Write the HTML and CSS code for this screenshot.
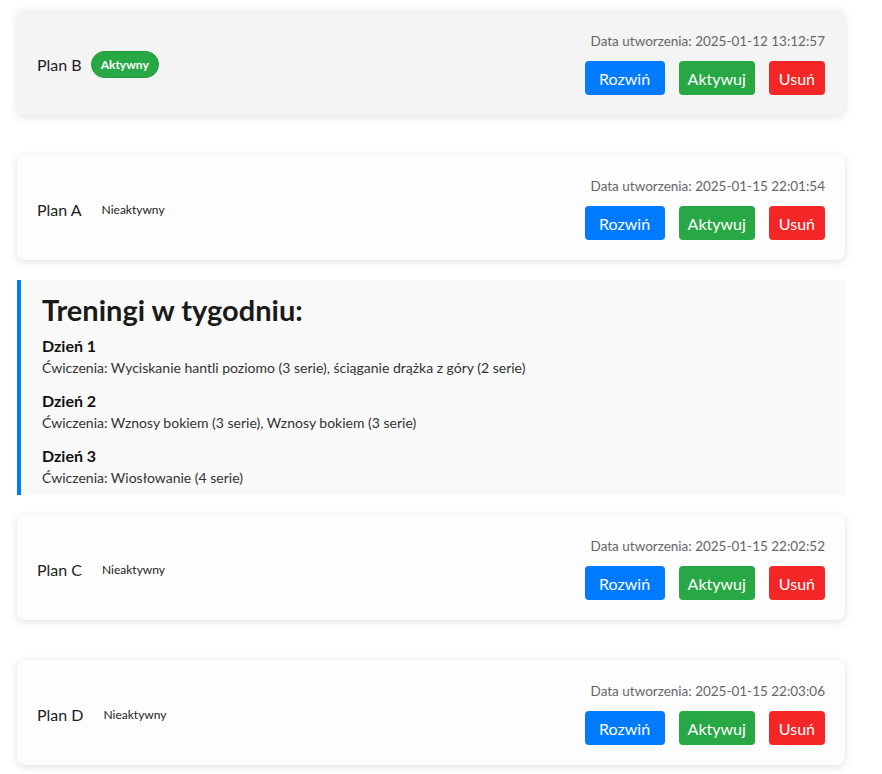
FILE: index.html
```html
<!DOCTYPE html>
<html lang="pl">
<head>
<meta charset="utf-8">
<title>Plany treningowe</title>
<link rel="stylesheet" href="styles.css">
</head>
<body>
<main class="plan-list">
  <section class="plan">
    <div class="plan-card is-active">
      <div class="plan-info">
        <span class="plan-name">Plan B</span>
        <span class="status status-active">Aktywny</span>
      </div>
      <div class="plan-side">
        <div class="plan-date">Data utworzenia: 2025-01-12 13:12:57</div>
        <div class="plan-actions">
          <button class="btn btn-blue btn-toggle">Rozwiń</button>
          <button class="btn btn-green">Aktywuj</button>
          <button class="btn btn-red">Usuń</button>
        </div>
      </div>
    </div>
  </section>

  <section class="plan is-open">
    <div class="plan-card">
      <div class="plan-info">
        <span class="plan-name">Plan A</span>
        <span class="status">Nieaktywny</span>
      </div>
      <div class="plan-side">
        <div class="plan-date">Data utworzenia: 2025-01-15 22:01:54</div>
        <div class="plan-actions">
          <button class="btn btn-blue btn-toggle">Rozwiń</button>
          <button class="btn btn-green">Aktywuj</button>
          <button class="btn btn-red">Usuń</button>
        </div>
      </div>
    </div>
    <div class="plan-details">
      <h2 class="details-title">Treningi w tygodniu:</h2>
      <div class="day">
        <h3 class="day-title">Dzień 1</h3>
        <p class="day-text">Ćwiczenia: Wyciskanie hantli poziomo (3 serie), ściąganie drążka z góry (2 serie)</p>
      </div>
      <div class="day">
        <h3 class="day-title">Dzień 2</h3>
        <p class="day-text">Ćwiczenia: Wznosy bokiem (3 serie), Wznosy bokiem (3 serie)</p>
      </div>
      <div class="day">
        <h3 class="day-title">Dzień 3</h3>
        <p class="day-text">Ćwiczenia: Wiosłowanie (4 serie)</p>
      </div>
    </div>
  </section>

  <section class="plan">
    <div class="plan-card">
      <div class="plan-info">
        <span class="plan-name">Plan C</span>
        <span class="status">Nieaktywny</span>
      </div>
      <div class="plan-side">
        <div class="plan-date">Data utworzenia: 2025-01-15 22:02:52</div>
        <div class="plan-actions">
          <button class="btn btn-blue btn-toggle">Rozwiń</button>
          <button class="btn btn-green">Aktywuj</button>
          <button class="btn btn-red">Usuń</button>
        </div>
      </div>
    </div>
  </section>

  <section class="plan">
    <div class="plan-card">
      <div class="plan-info">
        <span class="plan-name">Plan D</span>
        <span class="status">Nieaktywny</span>
      </div>
      <div class="plan-side">
        <div class="plan-date">Data utworzenia: 2025-01-15 22:03:06</div>
        <div class="plan-actions">
          <button class="btn btn-blue btn-toggle">Rozwiń</button>
          <button class="btn btn-green">Aktywuj</button>
          <button class="btn btn-red">Usuń</button>
        </div>
      </div>
    </div>
  </section>
</main>
</body>
</html>
```

FILE: styles.css
```css
* { box-sizing: border-box; }

html, body {
  margin: 0;
  padding: 0;
  background: #ffffff;
}

body {
  font-family: Lato, "Noto Sans", sans-serif;
  color: #222222;
}

.plan-list {
  width: 845px;
  padding: 10px 0 0 17px;
  display: flex;
  flex-direction: column;
  gap: 20px;
}

.plan {
  display: flex;
  flex-direction: column;
  gap: 20px;
  padding-bottom: 20px;
}

.plan.is-open {
  padding-bottom: 0;
}

.plan-card {
  height: 105px;
  padding: 21px 20px 20px;
  display: flex;
  align-items: center;
  justify-content: space-between;
  background: #fdfdfd;
  border-radius: 8px;
  box-shadow: 0 2px 8px rgba(0, 0, 0, 0.12);
}

.plan-card.is-active {
  background: #f4f4f4;
}

.plan-info {
  display: flex;
  align-items: center;
  gap: 9px;
  padding-top: 3px;
}

.plan-name {
  font-size: 16px;
  color: #1e1e1e;
}

.status {
  font-size: 12px;
  line-height: 15px;
  padding: 5px 10px;
  border-radius: 14px;
  border: 1px solid transparent;
  color: #222222;
}

.status-active {
  background: #28a745;
  border-color: #1f9a3b;
  color: #ffffff;
  font-weight: 700;
  padding: 5px 9px;
}

.plan-side {
  display: flex;
  flex-direction: column;
  align-items: flex-end;
  gap: 10px;
}

.plan-date {
  font-size: 13.5px;
  line-height: 20px;
  color: #666666;
}

.plan-actions {
  display: flex;
  gap: 14px;
}

.btn {
  height: 34px;
  padding: 0 10px;
  border: none;
  border-radius: 4px;
  font-family: inherit;
  font-size: 16px;
  color: #ffffff;
  cursor: pointer;
}

.btn-toggle {
  min-width: 80px;
}

.btn-blue { background: #007bff; }
.btn-green { background: #28a745; padding: 0 9px; }
.btn-red { background: #f42626; }

.plan-details {
  background: #f9f9f9;
  border-left: 4px solid #007bff;
  padding: 12px 20px 7px 21px;
}

.details-title {
  margin: 0 0 7px;
  font-size: 29px;
  line-height: 36px;
  font-weight: 700;
  color: #1a1a1a;
}

.day + .day {
  margin-top: 12px;
}

.day-title {
  margin: 0 0 1px;
  font-size: 16px;
  line-height: 22px;
  font-weight: 700;
  color: #111111;
}

.day-text {
  margin: 0;
  font-size: 14px;
  line-height: 20px;
  color: #333333;
}
```
